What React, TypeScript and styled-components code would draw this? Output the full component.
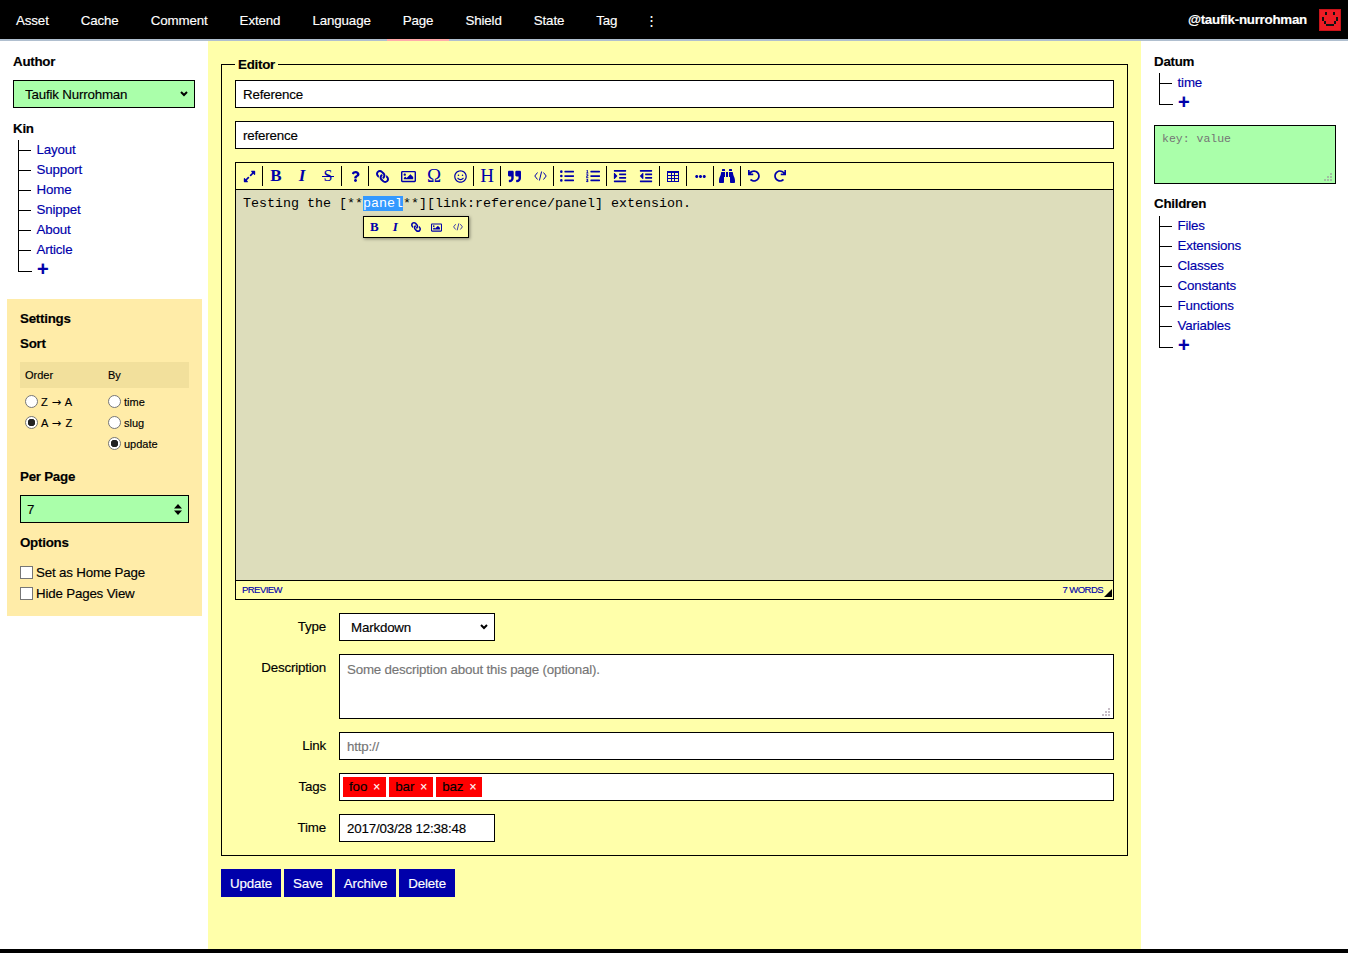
import React from 'react'
import styled, { createGlobalStyle } from 'styled-components'
import {
	FaExpandAlt,
	FaQuestion,
	FaLink,
	FaRegImage,
	FaRegSmile,
	FaQuoteRight,
	FaListUl,
	FaListOl,
	FaIndent,
	FaOutdent,
	FaEllipsisH,
	FaBinoculars,
	FaUndo,
	FaRedo,
} from 'react-icons/fa'

const gripIcon =
	"url(\"data:image/svg+xml;utf8,<svg xmlns='http://www.w3.org/2000/svg' width='8' height='8'><path d='M6 0h2v2H6zM3 3h2v2H3zM6 3h2v2H6zM0 6h2v2H0zM3 6h2v2H3zM6 6h2v2H6z' fill='%23998899' fill-opacity='.55'/></svg>\")"

const chevronIcon =
	"url(\"data:image/svg+xml;utf8,<svg xmlns='http://www.w3.org/2000/svg' width='8' height='6'><path d='M1 1l3 3 3-3' fill='none' stroke='%23000' stroke-width='2'/></svg>\")"

const GlobalStyle = createGlobalStyle`
	html, body, #root {
		margin: 0;
		height: 100%;
	}
	body {
		font: 13.33px/20px "Liberation Sans", Arial, sans-serif;
		letter-spacing: -0.18px;
		-webkit-text-stroke: 0.15px;
		color: #000;
		background: #fff;
	}
	input, select, textarea, button {
		letter-spacing: inherit;
		-webkit-text-stroke: inherit;
	}
	* {
		box-sizing: border-box;
	}
`

const Page = styled.div`
	height: 953px;
	display: flex;
	flex-direction: column;
	overflow: hidden;
	border-bottom: 4px solid #000;
`

const Nav = styled.nav`
	height: 41px;
	flex: none;
	display: flex;
	background: #000;
	border-bottom: 2px solid #b0bfcf;
`

const NavItem = styled.a<{ $active?: boolean }>`
	height: 41px;
	padding: 0 16px;
	line-height: 41px;
	letter-spacing: -0.12px;
	color: #fff;
	border-bottom: 2px solid ${(p) => (p.$active ? '#ffaaaa' : 'transparent')};
`

const NavMore = styled(NavItem)`
	margin-left: -4px;
`

const NavUser = styled.div`
	margin-left: auto;
	display: flex;
	align-items: center;
	height: 39px;
	padding: 1px 7px 0 0;
	gap: 12px;
	color: #fff;
	font-weight: bold;
	letter-spacing: -0.25px;
`

const Columns = styled.div`
	flex: 1;
	display: grid;
	grid-template-columns: 208px 933px 207px;
	min-height: 0;
`

const LeftColumn = styled.aside`
	padding: 10px 6px 0 7px;
`

const RightColumn = styled.aside`
	padding: 10px 12px 0 13px;
`

const Group = styled.section`
	padding: 0 6px;
	margin-bottom: 10px;
`

const Heading = styled.h3`
	margin: 0;
	font-size: 13.33px;
	line-height: 20px;
	font-weight: bold;
	letter-spacing: -0.25px;
`

const TreeHeading = styled(Heading)`
	line-height: 22px;
	margin-bottom: -2px;
`

const Tree = styled.ul`
	list-style: none;
	margin: 2px 0 0 5px;
	padding: 0;
`

const TreeItem = styled.li`
	height: 20px;
	display: flex;
	align-items: center;
	border-left: 1px solid #000;
	color: #0000aa;

	&::before {
		content: '';
		width: 12px;
		height: 1px;
		margin-right: 5.6px;
		background: #000;
	}

	&:last-child {
		border-left: 0;
		&::before {
			width: 13px;
			height: 11px;
			align-self: flex-start;
			background: none;
			border-left: 1px solid #000;
			border-bottom: 1px solid #000;
		}
	}
`

const Plus = styled.span`
	margin: -2px 0 0 -0.5px;
	font-size: 20px;
	font-weight: bold;
	line-height: 20px;
`

const GreenSelect = styled.select`
	appearance: none;
	width: 182px;
	height: 28px;
	margin-top: 9px;
	padding: 2px 11px 0;
	background: #aaffaa ${chevronIcon} no-repeat right 6px center;
	border: 1px solid #000;
	border-radius: 0;
	font: inherit;
	color: #000;
`

const SettingsPanel = styled.section`
	width: 195px;
	height: 317px;
	margin-top: 19px;
	padding: 10px 13px;
	background: #ffeca8;
`

const SortTable = styled.div`
	display: grid;
	grid-template-columns: 83px 86px;
	margin-top: 8px;
	font-size: 11px;
	letter-spacing: 0;
`

const SortColumn = styled.div`
	display: flex;
	flex-direction: column;
`

const SortHead = styled.div`
	height: 26px;
	line-height: 26px;
	padding-left: 5px;
	margin-bottom: 3px;
	background: #f2e09c;
`

const RadioRow = styled.label`
	height: 21px;
	display: flex;
	align-items: center;
	gap: 3px;
	padding-left: 5px;
`

const Arrow = styled.span`
	margin: 0 1px;
	font-family: "DejaVu Sans", sans-serif;
	font-size: 11.5px;
	line-height: 0;
	-webkit-text-stroke: 0;
`

const Radio = styled.input.attrs({ type: 'radio' })`
	appearance: none;
	width: 13px;
	height: 13px;
	margin: 0;
	background: #fff;
	border: 1px solid #767676;
	border-radius: 50%;

	&:checked {
		background: radial-gradient(circle, #222 0 3.5px, #fff 4px);
	}
`

const PerPageSelect = styled.select`
	appearance: none;
	display: block;
	width: 169px;
	height: 28px;
	margin-top: 8px;
	padding: 2px 6px 0;
	background: #aaffaa url("data:image/svg+xml;utf8,<svg xmlns='http://www.w3.org/2000/svg' width='8' height='11'><path d='M4 0l4 4.5H0zM4 11l4-4.5H0z' fill='%23000'/></svg>") no-repeat right 6px center;
	border: 1px solid #000;
	border-radius: 0;
	font: inherit;
	color: #000;
`

const SpacedHeading = styled(Heading)<{ $top: number }>`
	margin-top: ${(p) => p.$top}px;
`

const CheckList = styled.div`
	margin-top: 9px;
`

const CheckRow = styled.label`
	height: 21px;
	display: flex;
	align-items: center;
	gap: 3px;
`

const CheckBox = styled.input.attrs({ type: 'checkbox' })`
	appearance: none;
	width: 13px;
	height: 13px;
	margin: 0;
	background: #fff;
	border: 1px solid #767676;
`

const Main = styled.main`
	background: #ffffaa;
	padding: 14px 13px 0;
`

const Fieldset = styled.fieldset`
	margin: 0;
	padding: 7px 13px 13px;
	border: 1px solid #000;
	display: flex;
	flex-direction: column;
	gap: 13px;
`

const Legend = styled.legend`
	padding: 2px 3px 0;
	font-weight: bold;
	line-height: 16px;
	letter-spacing: -0.25px;
`

const TextInput = styled.input<{ $width?: string }>`
	display: block;
	width: ${(p) => p.$width ?? '100%'};
	height: 28px;
	padding: 0 7px;
	background: #fff;
	border: 1px solid #000;
	border-radius: 0;
	outline: 0;
	font: inherit;
	color: #000;
`

const Editor = styled.div`
	height: 438px;
	border: 1px solid #000;
	display: flex;
	flex-direction: column;
`

const Toolbar = styled.div`
	height: 27px;
	flex: none;
	display: flex;
	align-items: center;
	border-bottom: 1px solid #000;
`

const ToolButton = styled.span<{ $size?: number; $italic?: boolean; $weight?: number }>`
	position: relative;
	width: 26px;
	height: 26px;
	display: flex;
	align-items: center;
	justify-content: center;
	color: #0000aa;
	font-family: "Liberation Serif", serif;
	font-size: ${(p) => p.$size ?? 14}px;
	font-style: ${(p) => (p.$italic ? 'italic' : 'normal')};
	font-weight: ${(p) => p.$weight ?? 700};
	line-height: 26px;
	letter-spacing: 0;
	-webkit-text-stroke: 0;
`

const StrikeButton = styled(ToolButton)`
	&::after {
		content: '';
		position: absolute;
		left: 7px;
		right: 7px;
		top: 13px;
		height: 1px;
		background: #0000aa;
	}
`

const ToolSeparator = styled.i`
	width: 1px;
	height: 20px;
	flex: none;
	background: #000;
`

const ChainIcon = styled(FaLink)`
	transform: scaleX(-1);
`

const CodeArea = styled.div`
	flex: 1;
	position: relative;
	padding: 4px 7px;
	background: #ddddbb;
	border-bottom: 1px solid #000;
	font: 13.33px/20px "Liberation Mono", "Courier New", monospace;
	letter-spacing: 0;
	-webkit-text-stroke: 0;
	white-space: pre;
`

const Selected = styled.span`
	background: #3399ff;
	color: #fff;
`

const FloatBar = styled.div`
	position: absolute;
	left: 127px;
	top: 26px;
	height: 22px;
	display: flex;
	align-items: center;
	background: #ffffaa;
	border: 1px solid #000;
	box-shadow: 1px 1px 3px rgba(0, 0, 0, 0.4);
`

const FloatButton = styled(ToolButton)`
	width: 20.8px;
	height: 20px;
`

const StatusBar = styled.div`
	height: 18px;
	flex: none;
	position: relative;
	display: flex;
	justify-content: space-between;
	padding: 0 10px 0 6px;
	color: #0000aa;
	font-size: 9.5px;
	letter-spacing: -0.55px;
	line-height: 18px;
	text-transform: uppercase;

	&::after {
		content: '';
		position: absolute;
		right: 1px;
		bottom: 2px;
		border-style: solid;
		border-width: 0 0 8px 8px;
		border-color: transparent transparent #000 transparent;
	}
`

const FormRow = styled.div`
	display: grid;
	grid-template-columns: 91px 1fr;
	column-gap: 13px;
`

const FormLabel = styled.label`
	text-align: right;
	line-height: 28px;
`

const TypeSelect = styled.select`
	appearance: none;
	width: 156px;
	height: 28px;
	padding: 2px 11px 0;
	background: #fff ${chevronIcon} no-repeat right 6px center;
	border: 1px solid #000;
	border-radius: 0;
	font: inherit;
	color: #000;
`

const Description = styled.textarea`
	display: block;
	width: 100%;
	height: 65px;
	padding: 5px 7px;
	background: #fff ${gripIcon} no-repeat right 3px bottom 2px;
	border: 1px solid #000;
	border-radius: 0;
	outline: 0;
	font: inherit;
	resize: none;
`

const TagsBox = styled.div`
	height: 28px;
	display: flex;
	align-items: center;
	gap: 3px;
	padding: 0 3px;
	background: #fff;
	border: 1px solid #000;
`

const Tag = styled.span`
	height: 20px;
	padding: 0 6px;
	display: flex;
	align-items: center;
	gap: 6px;
	background: #ff0000;
	color: #000;
	letter-spacing: -0.08px;

	b {
		color: #fff;
		font-weight: normal;
		font-size: 12px;
	}
`

const Actions = styled.div`
	margin-top: 13px;
	display: flex;
	gap: 3px;
`

const Button = styled.button`
	height: 28px;
	padding: 1px 9px 0;
	background: #0000aa;
	border: 0;
	color: #fff;
	font: inherit;
	letter-spacing: -0.15px;
`

const KeyValue = styled.textarea`
	display: block;
	width: 182px;
	height: 59px;
	margin: 12px 0 10px;
	padding: 6px 7px;
	background: #aaffaa ${gripIcon} no-repeat right 3px bottom 2px;
	border: 1px solid #000;
	border-radius: 0;
	outline: 0;
	font: 11.5px/14px "Liberation Mono", monospace;
	letter-spacing: 0;
	-webkit-text-stroke: 0;
	resize: none;
`

const navItems = ['Asset', 'Cache', 'Comment', 'Extend', 'Language', 'Page', 'Shield', 'State', 'Tag']

const Avatar = () => (
	<svg width="22" height="22" viewBox="0 0 22 22" shapeRendering="crispEdges">
		<rect width="22" height="22" fill="#ed1c24" />
		<rect x="6" y="3" width="2" height="3" fill="#111" />
		<rect x="14" y="3" width="2" height="3" fill="#111" />
		<path d="M3 8h2v4H3zM5 12h2v3H5zM7 15h8v2H7zM15 12h2v3h-2zM17 8h2v4h-2z" fill="#111" />
		<path d="M0 0h22v1H0zM0 21h22v1H0zM0 0h1v22H0zM21 0h1v22h-1z" fill="#c8141b" />
	</svg>
)

const CodeIcon = ({ size = 13 }: { size?: number }) => (
	<svg width={size} height={size * 0.77} viewBox="0 0 13 10" fill="none" stroke="#0000aa" strokeWidth="1">
		<path d="M3.5 1.5L0.8 5l2.7 3.5M9.5 1.5L12.2 5 9.5 8.5M7.6 0.5L5.4 9.5" />
	</svg>
)

const TableIcon = () => (
	<svg width="12" height="11" viewBox="0 0 12 11" shapeRendering="crispEdges">
		<path d="M0 0h12v11H0z" fill="#0000aa" />
		<path
			d="M1 2h3v2H1zM5 2h2v2H5zM8 2h3v2H8zM1 5h3v2H1zM5 5h2v2H5zM8 5h3v2H8zM1 8h3v2H1zM5 8h2v2H5zM8 8h3v2H8z"
			fill="#ffffaa"
		/>
	</svg>
)

const TreeList = ({ items }: { items: string[] }) => (
	<Tree>
		{items.map((item) => (
			<TreeItem key={item}>{item}</TreeItem>
		))}
		<TreeItem>
			<Plus>+</Plus>
		</TreeItem>
	</Tree>
)

const toolGroups: React.ReactNode[][] = [
	[<ToolButton><FaExpandAlt size={13} /></ToolButton>],
	[
		<ToolButton $size={17}>B</ToolButton>,
		<ToolButton $size={17} $italic>I</ToolButton>,
		<StrikeButton $size={16} $weight={400}>S</StrikeButton>,
	],
	[<ToolButton><FaQuestion size={11} /></ToolButton>],
	[
		<ToolButton><ChainIcon size={13} /></ToolButton>,
		<ToolButton><FaRegImage size={15} /></ToolButton>,
		<ToolButton $size={19} $weight={400}>Ω</ToolButton>,
		<ToolButton><FaRegSmile size={13} /></ToolButton>,
	],
	[<ToolButton $size={19} $weight={400}>H</ToolButton>],
	[<ToolButton><FaQuoteRight size={13} /></ToolButton>, <ToolButton><CodeIcon /></ToolButton>],
	[<ToolButton><FaListUl size={14} /></ToolButton>, <ToolButton><FaListOl size={14} /></ToolButton>],
	[<ToolButton><FaIndent size={14} /></ToolButton>, <ToolButton><FaOutdent size={14} /></ToolButton>],
	[<ToolButton><TableIcon /></ToolButton>],
	[<ToolButton><FaEllipsisH size={11} /></ToolButton>],
	[<ToolButton><FaBinoculars size={16} /></ToolButton>],
	[<ToolButton><FaUndo size={12} /></ToolButton>, <ToolButton><FaRedo size={12} /></ToolButton>],
]

export default function App() {
	return (
		<Page>
			<GlobalStyle />
			<Nav>
				{navItems.map((item) => (
					<NavItem key={item} $active={item === 'Page'}>
						{item}
					</NavItem>
				))}
				<NavMore>⋮</NavMore>
				<NavUser>
					@taufik-nurrohman
					<Avatar />
				</NavUser>
			</Nav>
			<Columns>
				<LeftColumn>
					<Group>
						<TreeHeading>Author</TreeHeading>
						<GreenSelect defaultValue="Taufik Nurrohman">
							<option>Taufik Nurrohman</option>
						</GreenSelect>
					</Group>
					<Group>
						<TreeHeading>Kin</TreeHeading>
						<TreeList items={['Layout', 'Support', 'Home', 'Snippet', 'About', 'Article']} />
					</Group>
					<SettingsPanel>
						<Heading>Settings</Heading>
						<SpacedHeading $top={5}>Sort</SpacedHeading>
						<SortTable>
							<SortColumn>
								<SortHead>Order</SortHead>
								<RadioRow><Radio name="order" /><span>Z <Arrow>→</Arrow> A</span></RadioRow>
								<RadioRow><Radio name="order" defaultChecked /><span>A <Arrow>→</Arrow> Z</span></RadioRow>
							</SortColumn>
							<SortColumn>
								<SortHead>By</SortHead>
								<RadioRow><Radio name="by" />time</RadioRow>
								<RadioRow><Radio name="by" />slug</RadioRow>
								<RadioRow><Radio name="by" defaultChecked />update</RadioRow>
							</SortColumn>
						</SortTable>
						<SpacedHeading $top={13}>Per Page</SpacedHeading>
						<PerPageSelect defaultValue="7">
							<option>7</option>
						</PerPageSelect>
						<SpacedHeading $top={10}>Options</SpacedHeading>
						<CheckList>
							<CheckRow><CheckBox />Set as Home Page</CheckRow>
							<CheckRow><CheckBox />Hide Pages View</CheckRow>
						</CheckList>
					</SettingsPanel>
				</LeftColumn>
				<Main>
					<Fieldset>
						<Legend>Editor</Legend>
						<TextInput defaultValue="Reference" />
						<TextInput defaultValue="reference" />
						<Editor>
							<Toolbar>
								{toolGroups.map((group, i) => (
									<React.Fragment key={i}>
										{i > 0 && <ToolSeparator />}
										{group.map((tool, j) => (
											<React.Fragment key={j}>{tool}</React.Fragment>
										))}
									</React.Fragment>
								))}
							</Toolbar>
							<CodeArea>
								Testing the [**<Selected>panel</Selected>**][link:reference/panel] extension.
								<FloatBar>
									<FloatButton $size={13}>B</FloatButton>
									<FloatButton $size={13} $italic>I</FloatButton>
									<FloatButton><ChainIcon size={10} /></FloatButton>
									<FloatButton><FaRegImage size={11} /></FloatButton>
									<FloatButton><CodeIcon size={10} /></FloatButton>
								</FloatBar>
							</CodeArea>
							<StatusBar>
								<span>Preview</span>
								<span>7 Words</span>
							</StatusBar>
						</Editor>
						<FormRow>
							<FormLabel>Type</FormLabel>
							<TypeSelect defaultValue="Markdown">
								<option>Markdown</option>
							</TypeSelect>
						</FormRow>
						<FormRow>
							<FormLabel>Description</FormLabel>
							<Description placeholder="Some description about this page (optional)." />
						</FormRow>
						<FormRow>
							<FormLabel>Link</FormLabel>
							<TextInput placeholder="http://" />
						</FormRow>
						<FormRow>
							<FormLabel>Tags</FormLabel>
							<TagsBox>
								{['foo', 'bar', 'baz'].map((tag) => (
									<Tag key={tag}>
										{tag}
										<b>×</b>
									</Tag>
								))}
							</TagsBox>
						</FormRow>
						<FormRow>
							<FormLabel>Time</FormLabel>
							<TextInput $width="156px" defaultValue="2017/03/28 12:38:48" />
						</FormRow>
					</Fieldset>
					<Actions>
						<Button>Update</Button>
						<Button>Save</Button>
						<Button>Archive</Button>
						<Button>Delete</Button>
					</Actions>
				</Main>
				<RightColumn>
					<TreeHeading>Datum</TreeHeading>
					<TreeList items={['time']} />
					<KeyValue placeholder="key: value" />
					<Heading>Children</Heading>
					<TreeList items={['Files', 'Extensions', 'Classes', 'Constants', 'Functions', 'Variables']} />
				</RightColumn>
			</Columns>
		</Page>
	)
}
